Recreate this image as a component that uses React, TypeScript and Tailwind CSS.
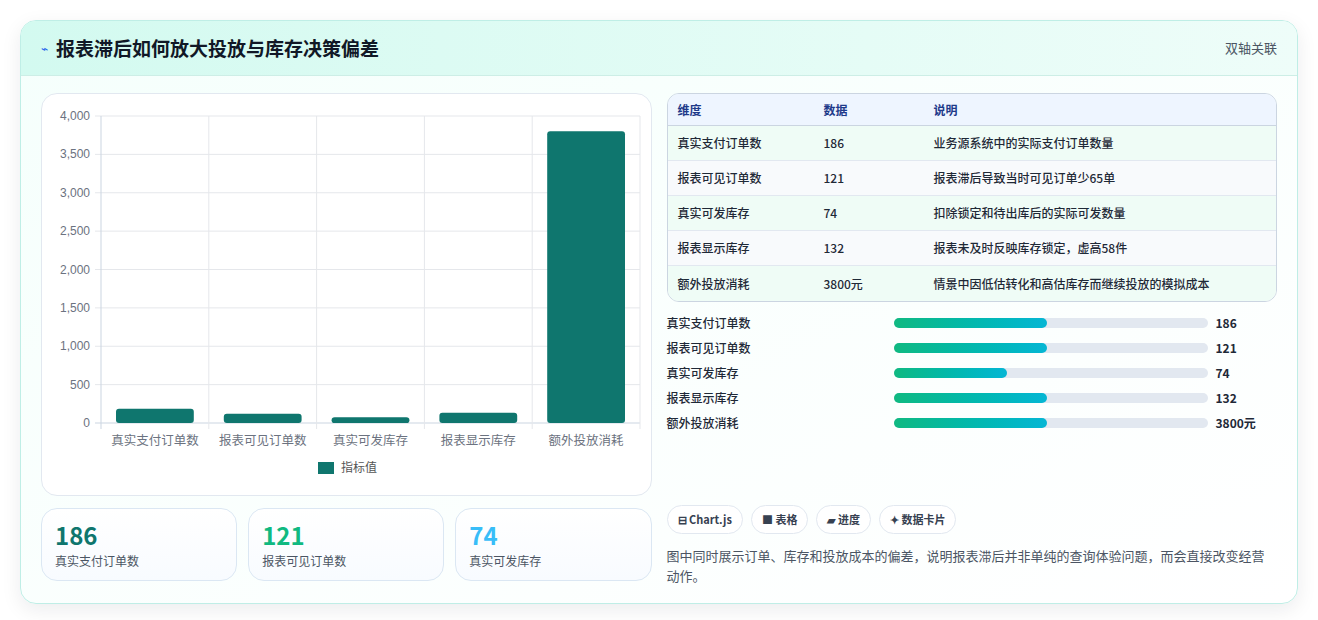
const font = { fontFamily: '"Noto Sans CJK SC", "Noto Sans", sans-serif' };

const cats = [
  { name: '真实支付订单数', v: 186, desc: '业务源系统中的实际支付订单数量', shown: '186', pct: 49 },
  { name: '报表可见订单数', v: 121, desc: '报表滞后导致当时可见订单少65单', shown: '121', pct: 49 },
  { name: '真实可发库存', v: 74, desc: '扣除锁定和待出库后的实际可发数量', shown: '74', pct: 36 },
  { name: '报表显示库存', v: 132, desc: '报表未及时反映库存锁定，虚高58件', shown: '132', pct: 49 },
  { name: '额外投放消耗', v: 3800, desc: '情景中因低估转化和高估库存而继续投放的模拟成本', shown: '3800元', pct: 49 },
];

function Chart() {
  const x0 = 59, x1 = 598, y0 = 22, y1 = 329;
  const cw = (x1 - x0) / 5;
  const ticks = [0, 500, 1000, 1500, 2000, 2500, 3000, 3500, 4000];
  const y = (v: number) => y1 - (v / 4000) * (y1 - y0);
  return (
    <svg width="611" height="400" className="block">
      {ticks.map((t) => (
        <g key={t}>
          <line x1={x0 - 6} x2={x1} y1={y(t)} y2={y(t)} stroke={t === 0 ? '#cbd5e1' : '#e5e7eb'} />
          <text x={x0 - 11} y={y(t) + 4} textAnchor="end" fontSize="12" fill="#6b7280" style={{ fontFamily: '"Liberation Sans", sans-serif' }}>
            {t.toLocaleString('en-US')}
          </text>
        </g>
      ))}
      {[0, 1, 2, 3, 4, 5].map((i) => (
        <line key={i} x1={x0 + i * cw} x2={x0 + i * cw} y1={y0} y2={y1 + 6} stroke={i === 0 ? '#cbd5e1' : '#e5e7eb'} />
      ))}
      {cats.map((c, i) => (
        <g key={c.name}>
          <rect x={x0 + i * cw + 15} width={cw - 30} y={y(c.v)} height={y1 - y(c.v)} rx="3" fill="#0f766e" />
          <text x={x0 + i * cw + cw / 2} y={y1 + 22} textAnchor="middle" fontSize="12.5" fill="#6b7280" style={font}>{c.name}</text>
        </g>
      ))}
      <rect x="276" y="368" width="16" height="12" fill="#0f766e" />
      <text x="299" y="378" fontSize="12" fill="#555" style={font}>指标值</text>
    </svg>
  );
}

export default function App() {
  return (
    <div className="min-h-[620px] bg-white p-5" style={font}>
      <div className="rounded-2xl border border-[#bfeee6] bg-gradient-to-br from-[#f5fffc] to-white shadow-[0_6px_20px_rgba(15,23,42,0.08)] overflow-hidden">
        <div className="h-[55px] flex items-center justify-between px-5 bg-gradient-to-r from-[#d3faf0] to-[#eefdf9] border-b border-[#cdeee6]">
          <div className="flex items-center gap-2">
            <span className="text-[#2563eb] text-xs">⌁</span>
            <h1 className="text-[19px] font-bold text-[#111827]">报表滞后如何放大投放与库存决策偏差</h1>
          </div>
          <span className="text-[13px] text-[#4b5563]">双轴关联</span>
        </div>
        <div className="grid grid-cols-2 gap-[15px] px-5 pt-[17px] pb-[17px]">
          <div className="flex flex-col gap-3">
            <div className="h-[403px] rounded-2xl border border-[#e2e8f0] bg-white">
              <Chart />
            </div>
            <div className="grid grid-cols-3 gap-[11px]">
              {[
                ['186', '真实支付订单数', 'text-[#0f766e]'],
                ['121', '报表可见订单数', 'text-[#10b981]'],
                ['74', '真实可发库存', 'text-[#38bdf8]'],
              ].map(([n, l, c]) => (
                <div key={l} className="h-[73px] rounded-2xl border border-[#dbe7f3] bg-gradient-to-b from-white to-[#f8fbff] px-[13px] pt-[10px]">
                  <div className={`text-[24px] font-bold leading-8 ${c}`}>{n}</div>
                  <div className="text-xs text-[#4b5563] mt-0.5">{l}</div>
                </div>
              ))}
            </div>
          </div>
          <div className="flex flex-col">
            <div className="rounded-xl border border-[#cbd5e1] overflow-hidden text-xs">
              <div className="grid grid-cols-[146px_110px_1fr] h-8 items-center px-[10px] bg-[#eef5ff] border-b border-[#cbd5e1] font-bold text-[#1e3a8a]">
                <span>维度</span><span>数据</span><span>说明</span>
              </div>
              {cats.map((c, i) => (
                <div key={c.name} className={`grid grid-cols-[146px_110px_1fr] h-[35px] items-center px-[10px] text-[#1f2937] font-medium ${i % 2 ? 'bg-[#f8fafc]' : 'bg-[#effcf6]'} ${i < 4 ? 'border-b border-[#e2e8f0]' : ''}`}>
                  <span>{c.name}</span><span>{c.shown}</span><span>{c.desc}</span>
                </div>
              ))}
            </div>
            <div className="flex flex-col gap-[7px] mt-[12px]">
              {cats.map((c) => (
                <div key={c.name} className="flex items-center h-[18px] text-xs">
                  <span className="w-[227px] text-[#1f2937] font-medium">{c.name}</span>
                  <div className="w-[314px] h-[10px] rounded-full bg-[#e2e8f0]">
                    <div className="h-full rounded-full bg-gradient-to-r from-[#10b981] to-[#06b6d4]" style={{ width: `${c.pct}%` }} />
                  </div>
                  <span className="ml-[8px] font-bold text-[#1f2937]">{c.shown}</span>
                </div>
              ))}
            </div>
            <div className="flex gap-2 mt-[73px]">
              {['⊟ Chart.js', '■ 表格', '▰ 进度', '✦ 数据卡片'].map((t) => (
                <span key={t} className="h-[29px] px-[10px] flex items-center rounded-full border border-[#e2e8f0] bg-white text-[11px] font-bold text-[#374151]">{t}</span>
              ))}
            </div>
            <p className="mt-[12px] text-[13px] leading-5 text-[#4b5563]">图中同时展示订单、库存和投放成本的偏差，说明报表滞后并非单纯的查询体验问题，而会直接改变经营动作。</p>
          </div>
        </div>
      </div>
    </div>
  );
}
